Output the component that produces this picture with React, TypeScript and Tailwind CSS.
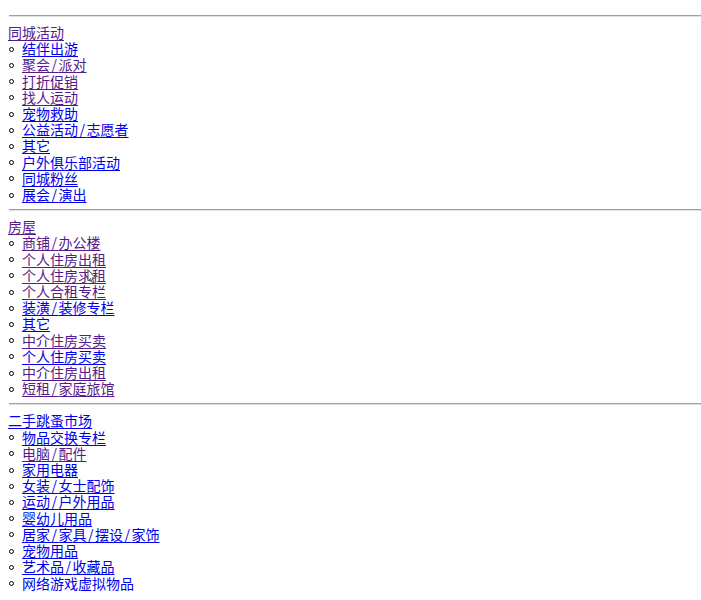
import React from "react";

type Item = [string, boolean]; // text, visited

const sections: { title: string; visited: boolean; items: Item[] }[] = [
  {
    title: "同城活动",
    visited: true,
    items: [
      ["结伴出游", false],
      ["聚会/派对", true],
      ["打折促销", true],
      ["找人运动", true],
      ["宠物救助", false],
      ["公益活动/志愿者", false],
      ["其它", false],
      ["户外俱乐部活动", false],
      ["同城粉丝", false],
      ["展会/演出", false],
    ],
  },
  {
    title: "房屋",
    visited: true,
    items: [
      ["商铺/办公楼", true],
      ["个人住房出租", true],
      ["个人住房求租", true],
      ["个人合租专栏", true],
      ["装潢/装修专栏", false],
      ["其它", false],
      ["中介住房买卖", true],
      ["个人住房买卖", false],
      ["中介住房出租", true],
      ["短租/家庭旅馆", true],
    ],
  },
  {
    title: "二手跳蚤市场",
    visited: false,
    items: [
      ["物品交换专栏", false],
      ["电脑/配件", true],
      ["家用电器", false],
      ["女装/女士配饰", false],
      ["运动/户外用品", false],
      ["婴幼儿用品", false],
      ["居家/家具/摆设/家饰", false],
      ["宠物用品", false],
      ["艺术品/收藏品", false],
      ["网络游戏虚拟物品", false],
    ],
  },
];

function Spaced({ text }: { text: string }) {
  const parts = text.split("/");
  return (
    <>
      {parts.map((p, i) =>
        i < parts.length - 1 ? (
          <React.Fragment key={i}>
            {p.slice(0, -1)}
            <span className="tracking-[1.5px]">{p.slice(-1) + "/"}</span>
          </React.Fragment>
        ) : (
          <React.Fragment key={i}>{p}</React.Fragment>
        )
      )}
    </>
  );
}

function Link({ text, visited }: { text: string; visited: boolean }) {
  return (
    <a
      href="#"
      className={
        "underline underline-offset-[2px] " +
        (visited ? "text-[#551A8B]" : "text-[#0000EE]")
      }
    >
      <Spaced text={text} />
    </a>
  );
}

export default function App() {
  return (
    <div
      className="relative pl-2 pt-2 text-[14px] leading-[16.2px] text-black bg-white"
      style={{ fontFamily: '"Noto Sans CJK SC", "Noto Sans", sans-serif' }}
    >
      {sections.map((s) => (
        <div key={s.title}>
          <div className="my-[7px] h-[2px] border-t border-t-[#a0a0a0] border-b border-b-[#e0e0e0] ml-[1px]" />
          <div>
            <Link text={s.title} visited={s.visited} />
          </div>
          <ul>
            {s.items.map(([t, v], i) => (
              <li key={i} className="flex items-center">
                <span className="ml-[1px] mr-[8px] mt-[2px] w-[5px] h-[5px] rounded-full border border-black shrink-0" />
                <Link text={t} visited={v} />
              </li>
            ))}
          </ul>
        </div>
      ))}
      <svg
        className="absolute left-[87px] top-[269px] z-10"
        width="11"
        height="16"
        viewBox="0 0 11 16"
      >
        <path
          d="M1 1 L1 12 L3.5 9.5 L5.5 14 L7 13.3 L5 9 L8.5 9 Z"
          fill="white"
          stroke="#555"
          strokeWidth="1"
          strokeLinejoin="round"
        />
      </svg>
    </div>
  );
}
